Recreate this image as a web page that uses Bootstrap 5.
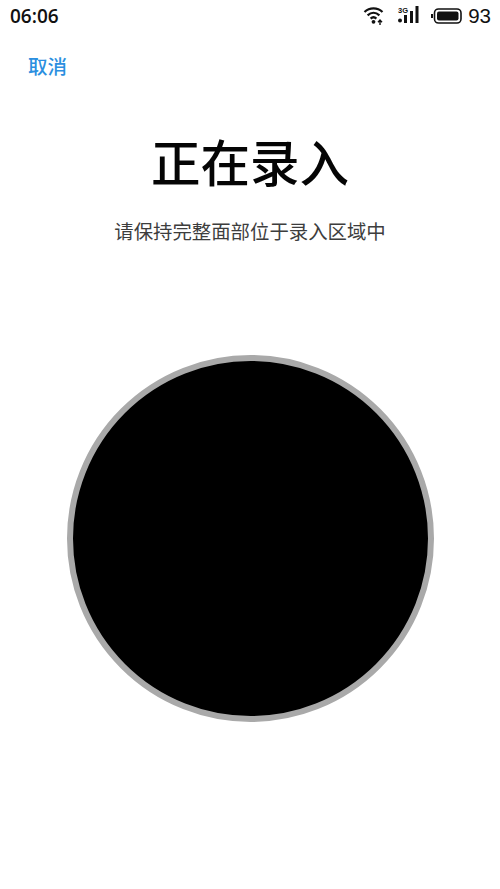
<!DOCTYPE html>
<html lang="zh">
<head>
<meta charset="utf-8">
<title>正在录入</title>
<link href="https://cdn.jsdelivr.net/npm/bootstrap@5.3.0/dist/css/bootstrap.min.css" rel="stylesheet">
<style>
html,body{height:100%;}
body{background:#fff;overflow:hidden;font-family:"Liberation Sans","Noto Sans CJK SC",sans-serif;}
.screen{width:500px;height:889px;}
.statusrow{height:32px;padding:0 9px 0 10px;color:#111;font-size:19px;font-family:"Open Sans","Liberation Sans",sans-serif;font-weight:600;}
.statusright{gap:11px;}
.cancelrow{padding:16px 0 0 28px;height:46px;}
.cancel{color:#2b8fe0;font-size:19.5px;line-height:36px;font-weight:500;font-family:"Noto Sans CJK SC",sans-serif;text-decoration:none;}
.headline{font-family:"Noto Sans CJK SC",sans-serif;font-size:49.5px;line-height:60px;font-weight:500;color:#050505;margin:0;padding-top:53px;}
.hint{font-family:"Noto Sans CJK SC",sans-serif;font-size:19.4px;line-height:30px;color:#3d3d3d;margin:0;padding-top:25px;}
.facering{width:367px;height:367px;flex:none;border:6px solid #a9a9a9;background:#000;border-radius:50%;margin-top:109px;}
.batnum{font-family:"Liberation Sans",sans-serif;font-weight:400;font-size:20.5px;line-height:1;}
.batgroup{gap:6px;}
</style>
</head>
<body>
<div class="screen d-flex flex-column align-items-center">
  <div class="statusrow w-100 d-flex justify-content-between align-items-center">
    <span>06:06</span>
    <div class="statusright d-flex align-items-center">
      <svg width="22" height="20" viewBox="0 0 22 20" aria-hidden="true">
        <path d="M1.5 6C6.6 1.2 14.4 1.2 19.5 6" fill="none" stroke="#111" stroke-width="2.2"/>
        <path d="M4.6 9.4C8.2 6 12.8 6 16.4 9.4" fill="none" stroke="#111" stroke-width="2.2"/>
        <path d="M7.6 12.6C9.5 10.8 11.5 10.8 13.4 12.6" fill="none" stroke="#111" stroke-width="2.2"/>
        <circle cx="10.5" cy="15.8" r="1.9" fill="#111"/>
        <path d="M17 19V14.5M15 16.2L17 14L19 16.2" fill="none" stroke="#111" stroke-width="1.4"/>
      </svg>
      <svg width="24" height="20" viewBox="0 0 24 20" aria-hidden="true">
        <text x="2" y="6.5" font-size="7.5" font-weight="700" font-family="Liberation Sans" fill="#111">3G</text>
        <circle cx="4" cy="14.5" r="2" fill="#111"/>
        <rect x="8" y="9" width="3" height="8" fill="#111"/>
        <rect x="14" y="5" width="3" height="12" fill="#111"/>
        <rect x="19.5" y="0" width="3" height="17" fill="#111"/>
      </svg>
      <div class="batgroup d-flex align-items-center">
        <svg width="31" height="16" viewBox="0 0 31 16" aria-hidden="true">
          <rect x="0" y="6" width="2" height="4" fill="#111"/>
          <rect x="3.5" y="1" width="26.5" height="14" rx="4" fill="none" stroke="#111" stroke-width="1.6"/>
          <rect x="6" y="3.6" width="21.5" height="8.8" rx="2" fill="#111"/>
        </svg>
        <span class="batnum">93</span>
      </div>
    </div>
  </div>
  <div class="cancelrow w-100"><a class="cancel" href="#">取消</a></div>
  <h1 class="headline">正在录入</h1>
  <p class="hint">请保持完整面部位于录入区域中</p>
  <div class="facering"></div>
</div>
<script src="https://cdn.jsdelivr.net/npm/bootstrap@5.3.0/dist/js/bootstrap.bundle.min.js"></script>
</body>
</html>
